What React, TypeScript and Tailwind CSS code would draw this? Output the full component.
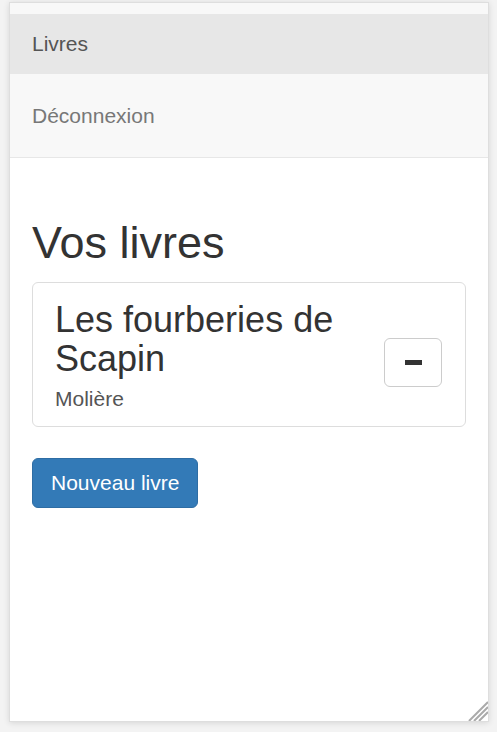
export default function App() {
  return (
    <div className="w-[497px] h-[732px] bg-[#f3f3f3] pt-[2px] pl-[9px] font-['Liberation_Sans',Arial,sans-serif] text-[#333]">
      <div className="relative w-[480px] h-[720px] bg-white border border-[#dedede] shadow-[0_1px_6px_rgba(0,0,0,0.12)] overflow-hidden">
        {/* Navbar (collapsed) */}
        <nav className="bg-[#f8f8f8] border-b border-[#e7e7e7] pt-[11px] pb-[11px]">
          <a className="flex items-center h-[60px] px-[22px] bg-[#e7e7e7] text-[#555] text-[21px]">Livres</a>
          <a className="mt-[12px] flex items-center h-[60px] px-[22px] text-[#777] text-[21px]">Déconnexion</a>
        </nav>

        <div className="px-[22px] pt-[60px]">
          <h2 className="text-[45px] leading-[1.1] mb-[14px]">Vos livres</h2>

          <div className="flex items-start justify-between border border-[#ddd] rounded-[6px] pt-[17px] pb-[12px] pl-[22px] pr-[23px]">
            <div className="flex-1 min-w-0 pr-[24px]">
              <h3 className="text-[36px] leading-[1.1]">Les fourberies de Scapin</h3>
              <p className="mt-[5px] text-[21px] leading-[30px] text-[#555]">Molière</p>
            </div>
            <button className="mt-[38px] w-[58px] h-[49px] flex items-center justify-center bg-white border border-[#ccc] rounded-[6px]">
              <span className="block w-[17px] h-[5px] bg-[#333]" />
            </button>
          </div>

          <button className="mt-[31px] px-[18px] py-[9px] text-[21px] leading-[30px] text-white bg-[#337ab7] border border-[#2e6da4] rounded-[6px]">
            Nouveau livre
          </button>
        </div>

        {/* resize grip */}
        <svg className="absolute right-0 bottom-0" width="20" height="20" viewBox="0 0 20 20">
          <path d="M20 1 L1 20 M20 6 L6 20 M20 11 L11 20" stroke="#aaa" strokeWidth="2" />
        </svg>
      </div>
    </div>
  );
}
